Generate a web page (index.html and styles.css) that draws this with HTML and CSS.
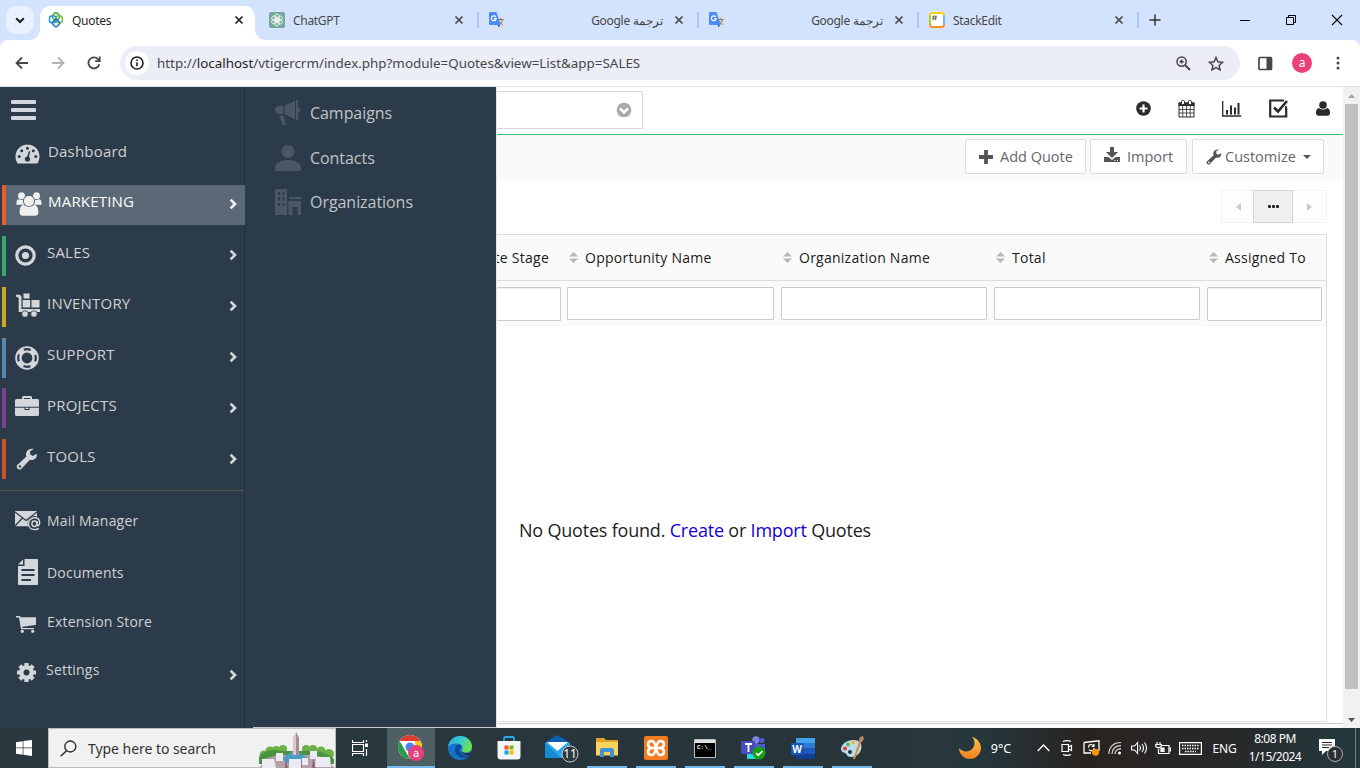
FILE: index.html
```html
<!DOCTYPE html>
<html lang="en">
<head>
<meta charset="utf-8">
<title>Quotes</title>
<link rel="stylesheet" href="styles.css">
</head>
<body>
<svg class="defs" aria-hidden="true">
  <defs>
    <symbol id="x" viewBox="0 0 10 10"><path d="M1.5 1.5l7 7M8.5 1.5l-7 7" stroke="currentColor" stroke-width="1.7" fill="none"/></symbol>
    <symbol id="chev" viewBox="0 0 8 12"><path d="M1.6 1.6L6 6l-4.4 4.4" stroke="currentColor" stroke-width="2.7" fill="none"/></symbol>
    <symbol id="wrench" viewBox="0 0 24 24"><path fill="currentColor" fill-rule="evenodd" d="M22.5 6.2l-4 2.5-3-1.7-.1-3.5L19.300 1.200C16.500.300 12.500 1.500 11.300 4.800c-.6 1.500-.4 3.200.1 4.400L1.700 18.400c-1.400 1.300-1.200 3 .2 4.200 1.300 1.100 2.800 1.100 4-.1l9.300-9.700c3.400 1.100 8.700-1.400 7.300-6.600zM4.400 18.900a1.300 1.300 0 1 1 0 2.600 1.300 1.300 0 0 1 0-2.600z"/></symbol>
    <symbol id="translate" viewBox="0 0 16 16"><path d="M6 4h9.500v11.500H9.500z" fill="#dcdcdc"/><path d="M8.500 7.500h6M11.500 6.300v1.200M13.500 7.500c-.5 2.500-2 4-4 5M9.800 8.500c1 2 2.200 3 4 4" stroke="#777" fill="none"/><path d="M8.500 12.500h3l-2 3z" fill="#3b50b5"/><path d="M1 0h6.500l4 13H1a1 1 0 0 1-1-1V1a1 1 0 0 1 1-1z" fill="#4c8bf5"/><path d="M6.800 4.900A2.400 2.400 0 1 0 7.200 6.600H4.900" stroke="#fff" stroke-width="1.200" fill="none"/></symbol>
    <symbol id="sort" viewBox="0 0 9 11"><path d="M4.500 0L9 4.500H0zM4.500 11L9 6.500H0z" fill="#b8b8b8"/></symbol>
  </defs>
</svg>

<header class="tabstrip">
  <button class="tab-search"><svg width="10" height="7" viewBox="0 0 10 7"><path d="M1.200 1.200L5 5l3.800-3.800" stroke="#1f1f1f" stroke-width="2" fill="none"/></svg></button>
  <div class="tab active">
    <svg width="16" height="16" viewBox="0 0 16 16" fill="none" stroke-width="1.500" stroke-linejoin="round"><rect x="4.700" y="1.200" width="6.600" height="6.600" rx="2.200" transform="rotate(45 8 4.500)" stroke="#4cae36"/><rect x="7.700" y="4" width="6.600" height="6.600" rx="2.200" transform="rotate(0 11 7.300)" stroke="#7dbb3c"/><rect x="1.500" y="4" width="6.600" height="6.600" rx="2.200" stroke="#1f9bd8"/><rect x="4.900" y="8" width="6.200" height="6.200" rx="2" transform="rotate(45 8 11.100)" stroke="#1976c0"/></svg>
    <span class="tab-title">Quotes</span><svg class="close" width="10" height="10"><use href="#x"/></svg>
  </div>
  <div class="tab">
    <svg width="16" height="16" viewBox="0 0 16 16"><rect width="16" height="16" rx="2" fill="#74aa9c"/><g fill="none" stroke="#fff" stroke-width=".8"><rect x="6" y="2.200" width="4.200" height="7" rx="2"/><rect x="6" y="2.200" width="4.200" height="7" rx="2" transform="rotate(60 8 8)"/><rect x="6" y="2.200" width="4.200" height="7" rx="2" transform="rotate(120 8 8)"/><rect x="6" y="2.200" width="4.200" height="7" rx="2" transform="rotate(180 8 8)"/><rect x="6" y="2.200" width="4.200" height="7" rx="2" transform="rotate(240 8 8)"/><rect x="6" y="2.200" width="4.200" height="7" rx="2" transform="rotate(300 8 8)"/></g></svg>
    <span class="tab-title">ChatGPT</span><svg class="close" width="10" height="10"><use href="#x"/></svg>
  </div>
  <div class="tab"><svg width="16" height="16"><use href="#translate"/></svg><span class="tab-title rtl" dir="rtl">ترجمة Google</span><svg class="close" width="10" height="10"><use href="#x"/></svg></div>
  <div class="tab"><svg width="16" height="16"><use href="#translate"/></svg><span class="tab-title rtl" dir="rtl">ترجمة Google</span><svg class="close" width="10" height="10"><use href="#x"/></svg></div>
  <div class="tab">
    <svg width="16" height="16" viewBox="0 0 16 16"><rect x="1" y="1" width="14" height="14" rx="2.500" fill="#fff"/><path d="M1 13V3" stroke="#b5cc18" stroke-width="2"/><path d="M15 13V3" stroke="#6fb7f5" stroke-width="2"/><path d="M1 3.500Q1 1 3.500 1h9Q15 1 15 3.500" fill="none" stroke="#fdd017" stroke-width="2"/><path d="M1 12.500Q1 15 3.500 15h9q2.500 0 2.500-2.500" fill="none" stroke="#f58f22" stroke-width="2"/><path d="M4.800 3.300l-.6 5M7 3.300l-.6 5M3.300 4.800H8M3 6.700h4.700" stroke="#555" stroke-width=".8"/></svg>
    <span class="tab-title">StackEdit</span><svg class="close" width="10" height="10"><use href="#x"/></svg>
  </div>
  <button class="new-tab"><svg width="12" height="12" viewBox="0 0 12 12"><path d="M6 .5v11M.5 6h11" stroke="#333" stroke-width="1.500"/></svg></button>
  <div class="window-controls">
    <span><svg width="12" height="12" viewBox="0 0 12 12"><path d="M1 6.500h10" stroke="#000"/></svg></span>
    <span><svg width="12" height="12" viewBox="0 0 12 12"><path d="M1.500 3.500h7v7h-7zM3.500 3.500v-2h7v7h-2" stroke="#000" fill="none"/></svg></span>
    <span><svg width="12" height="12" viewBox="0 0 12 12"><path d="M1 1l10 10M11 1L1 11" stroke="#000" stroke-width="1.100"/></svg></span>
  </div>
</header>

<div class="toolbar-back">
<div class="toolbar">
  <span class="nav-btn"><svg width="14" height="14" viewBox="0 0 14 14"><path d="M13 7H2M7 1.500L1.500 7 7 12.500" stroke="#474747" stroke-width="1.800" fill="none"/></svg></span>
  <span class="nav-btn"><svg width="14" height="14" viewBox="0 0 14 14"><path d="M1 7h11M7 1.500L12.500 7 7 12.500" stroke="#b1b1b1" stroke-width="1.800" fill="none"/></svg></span>
  <span class="nav-btn"><svg width="14" height="14" viewBox="0 0 14 14"><path d="M12.300 8.200A5.500 5.500 0 1 1 11 3.200l1.500 1.500M12.700.6v4.600H8.200" stroke="#474747" stroke-width="1.800" fill="none"/></svg></span>
  <div class="omnibox">
    <span class="site-info"><svg width="14" height="14" viewBox="0 0 14 14"><circle cx="7" cy="7" r="6" fill="none" stroke="#222" stroke-width="1.600"/><path d="M7 6.200v4M7 3.500v1.500" stroke="#222" stroke-width="1.600"/></svg></span>
    <span class="url">http://<b>localhost</b>/vtigercrm/index.php?module=Quotes&amp;view=List&amp;app=SALES</span>
    <svg class="zoom-icon" width="15" height="15" viewBox="0 0 15 15"><circle cx="5.600" cy="5.600" r="4.600" stroke="#474747" stroke-width="1.500" fill="none"/><path d="M9 9l5 5" stroke="#474747" stroke-width="2"/><path d="M5.600 3.600v4M3.600 5.600h4" stroke="#474747" stroke-width="1.600"/></svg>
    <svg width="16" height="15" viewBox="0 0 16 15"><path d="M8 1.600l1.900 4.200 4.700.5-3.500 3.100 1 4.500L8 11.500l-4.100 2.400 1-4.500-3.500-3.100 4.700-.5z" fill="none" stroke="#474747" stroke-width="1.500"/></svg>
  </div>
  <span class="panel-btn"><svg width="15" height="15" viewBox="0 0 15 15"><rect x="1" y="1.500" width="12.500" height="12" rx="1" fill="none" stroke="#474747" stroke-width="1.700"/><path d="M8.500 1.500h5v12h-5z" fill="#474747"/></svg></span>
  <span class="avatar">a</span>
  <span class="dots"><svg width="4" height="14" viewBox="0 0 4 14" fill="#474747"><circle cx="2" cy="2" r="1.500"/><circle cx="2" cy="7" r="1.500"/><circle cx="2" cy="12" r="1.500"/></svg></span>
</div>
</div>

<div class="page">
  <nav class="app-menu">
    <div class="burger"><i></i><i></i><i></i></div>
    <a class="item plain dash"><svg width="25" height="20" viewBox="0 0 25 20"><path fill="currentColor" d="M12.500.5A12 12 0 0 0 .5 12.500c0 2.300.7 4.700 1.800 6.500.3.400.5.500 1 .5h18.400c.5 0 .7-.1 1-.5 1.100-1.800 1.800-4.200 1.800-6.500a12 12 0 0 0-12-12z"/><g fill="#2c3b49"><circle cx="4.200" cy="12.500" r="1.500"/><circle cx="6.700" cy="6.700" r="1.500"/><circle cx="12.500" cy="4.200" r="1.500"/><circle cx="18.300" cy="6.700" r="1.500"/><circle cx="20.800" cy="12.500" r="1.500"/><circle cx="12.500" cy="15" r="2.600"/><path d="M12 13L14 7l1.300.4-1.600 6z"/></g></svg><span class="label">Dashboard</span></a>
    <a class="item app marketing"><svg width="26" height="24" viewBox="0 0 26 24" fill="currentColor"><circle cx="5.500" cy="3.700" r="3.500"/><circle cx="20.500" cy="3.700" r="3.500"/><path d="M.4 12c0-3.500 1-4.800 2.500-4.800 1.500.9 3.500.9 5 .4-.4 2 0 3.500 1 5.200H3C1.500 13 .4 13 .4 12zM25.600 12c0-3.500-1-4.800-2.500-4.800-1.500.9-3.500.9-5 .4.400 2 0 3.500-1 5.200H23c1.500.2 2.600.2 2.600-.8z"/><circle cx="13" cy="9" r="5.600" stroke="#5a6975"/><path d="M3.600 20.500c0-5 1.500-7.600 4.300-7.600 3 2.400 7.200 2.400 10.200 0 2.800 0 4.300 2.600 4.300 7.600 0 2-1.200 3.300-3.200 3.300H6.800c-2 0-3.200-1.300-3.200-3.300z"/></svg><span class="label">MARKETING</span><svg class="arrow" width="8" height="12"><use href="#chev"/></svg></a>
    <a class="item app sales"><svg width="21" height="21" viewBox="0 0 21 21"><circle cx="10.500" cy="10.500" r="8.700" stroke="currentColor" stroke-width="3.200" fill="none"/><circle cx="10.500" cy="10.500" r="3.600" fill="currentColor"/></svg><span class="label">SALES</span><svg class="arrow" width="8" height="12"><use href="#chev"/></svg></a>
    <a class="item app inventory"><svg width="25" height="24" viewBox="0 0 25 24" fill="currentColor"><path d="M0 1.800h3.800l1.700 1.700V16H24v3H2.700V5L0 3.500z"/><path d="M7.500.5h6v5h-6zM6.700 7h7.500v7.500H6.700zM15.500 7h8v7.500h-8z"/><circle cx="9" cy="21" r="3.300" stroke="#2c3b49" stroke-width=".8"/><circle cx="18" cy="21" r="3.300" stroke="#2c3b49" stroke-width=".8"/></svg><span class="label">INVENTORY</span><svg class="arrow" width="8" height="12"><use href="#chev"/></svg></a>
    <a class="item app support"><svg width="24" height="24" viewBox="0 0 24 24" fill="none"><circle cx="12" cy="12" r="8.600" stroke="currentColor" stroke-width="6.400"/><circle cx="12" cy="12" r="8.800" stroke="#2c3b49" stroke-width="2.200" stroke-dasharray="7 6.823" stroke-dashoffset="3.500"/></svg><span class="label">SUPPORT</span><svg class="arrow" width="8" height="12"><use href="#chev"/></svg></a>
    <a class="item app projects"><svg width="24" height="20" viewBox="0 0 24 20" fill="currentColor"><path d="M7 3V1.500Q7 0 8.500 0h7Q17 0 17 1.500V3h5.500Q24 3 24 4.500v6.200H0V4.500Q0 3 1.500 3zm2-1v1h6V2z" fill-rule="evenodd"/><path d="M0 11.700h9.500V14h5v-2.300H24v6.800q0 1.500-1.500 1.500h-21Q0 20 0 18.500z"/><path d="M10.500 11.700h3V13h-3z"/></svg><span class="label">PROJECTS</span><svg class="arrow" width="8" height="12"><use href="#chev"/></svg></a>
    <a class="item app tools"><svg width="22" height="22"><use href="#wrench"/></svg><span class="label">TOOLS</span><svg class="arrow" width="8" height="12"><use href="#chev"/></svg></a>
    <hr>
    <a class="item plain mail"><svg width="26" height="20" viewBox="0 0 26 20"><path d="M0 0h22v5.500a7 7 0 0 0-8.500 9.800H0z" fill="currentColor"/><path d="M0 1l11 8.500L22 1M0 15l7.500-8M14.500 7l2 1.500" stroke="#2c3b49" stroke-width="1.200" fill="none"/><path d="M22.500 10.300l-.6 3.700c-.1 1.500 2.800 1 2.800-2.200 0-3.400-2.500-5-5.300-5-3.400 0-5.900 2.600-5.900 5.900 0 3.700 2.700 5.900 6 5.900 1.800 0 3.200-.4 4.200-1.200" stroke="currentColor" stroke-width="1.400" fill="none"/><ellipse cx="19.400" cy="12.700" rx="2.500" ry="2.700" stroke="currentColor" stroke-width="1.500" fill="none"/></svg><span class="label">Mail Manager</span></a>
    <a class="item plain docs"><svg width="20" height="26" viewBox="0 0 20 26"><path d="M6.500 0H19q1 0 1 1v24q0 1-1 1H1q-1 0-1-1V7h6.500zM5 .5v5H0z" fill="currentColor"/><path d="M3.500 11h13M3.500 16h13M3.500 21h9.500" stroke="#2c3b49" stroke-width="2"/></svg><span class="label">Documents</span></a>
    <a class="item plain store"><svg width="20" height="17" viewBox="0 0 20 17" fill="currentColor"><path d="M0 0h4l.7 1.300H20V9L6.300 10.700l.2 1.300H18v1.300H5L3 1.500H0z"/><circle cx="6.300" cy="15.300" r="1.600"/><circle cx="16.700" cy="15.300" r="1.600"/></svg><span class="label">Extension Store</span></a>
    <a class="item plain settings"><svg width="19" height="19" viewBox="0 0 19 19"><path d="M9.500 0v19M0 9.500h19M2.800 2.800l13.400 13.400M16.200 2.800L2.800 16.200" stroke="currentColor" stroke-width="4.200"/><circle cx="9.500" cy="9.500" r="7.300" fill="currentColor"/><circle cx="9.500" cy="9.500" r="3" fill="#2c3b49"/></svg><span class="label">Settings</span><svg class="arrow" width="8" height="12"><use href="#chev"/></svg></a>
  </nav>

  <nav class="sub-menu">
    <a><svg width="26" height="26" viewBox="0 0 26 26" fill="currentColor"><path d="M4 6h4.500v8H4Q0 13.500 0 10t4-4zM9.800 5.800L20 .8v18.500l-10.200-5zM21 0h2v7.500q2.500 0 2.500 2.500T23 12.500V20h-2zM4 15.500h4.500L10.800 25H8z"/></svg><span>Campaigns</span></a>
    <a><svg width="26" height="26" viewBox="0 0 26 26" fill="currentColor"><circle cx="13" cy="6.500" r="6.500"/><path d="M0 26v-3c0-4.500 6-8 13-8s13 3.500 13 8c0 1.500 0 3-2 3z"/></svg><span>Contacts</span></a>
    <a><svg width="26" height="26" viewBox="0 0 26 26" fill="currentColor"><path fill-rule="evenodd" d="M1 0h11v26H0V1zM3 3v3h2V3zm4.500 0v3h2V3zM3 8.500v3h2v-3zm4.500 0v3h2v-3zM3 14v3h2v-3zm4.500 0v3h2v-3zM14 8h12v2H14zM13.500 12H26v14h-3.500v-8h-5v8h-4z"/></svg><span>Organizations</span></a>
    <i class="edge-line"></i>
  </nav>

  <main class="content">
    <div class="topbar">
      <div class="search-box"><svg width="16" height="16" viewBox="0 0 16 16"><circle cx="8" cy="8" r="7.300" fill="#aaa"/><path d="M4 6.500l4 4 4-4" stroke="#fff" stroke-width="2.500" fill="none"/></svg></div>
      <div class="top-icons">
        <svg width="15" height="15" viewBox="0 0 15 15"><circle cx="7.500" cy="7.500" r="7.300" fill="#2b2b2b"/><path d="M7.500 3.500v8M3.500 7.500h8" stroke="#fff" stroke-width="2.200"/></svg>
        <svg width="17" height="18" viewBox="0 0 17 18"><path d="M1 3h15v14H1z" fill="#fff" stroke="#2b2b2b"/><path d="M.5 2.500h16V6H.5z" fill="#2b2b2b"/><path d="M1 9.500h15M1 13h15M4.700 6v11M8.500 6v11M12.200 6v11" stroke="#2b2b2b" stroke-width=".8"/><rect x="3.500" y=".5" width="3" height="4" rx="1" fill="#fff" stroke="#2b2b2b"/><rect x="10.500" y=".5" width="3" height="4" rx="1" fill="#fff" stroke="#2b2b2b"/></svg>
        <svg width="20" height="16" viewBox="0 0 20 16"><path d="M.7 0v15h18.500" stroke="#2b2b2b" stroke-width="1.300" fill="none"/><path d="M5 9v4.500M9 4.500v9M13 6.500v7M16.500 2v11.500" stroke="#2b2b2b" stroke-width="2"/></svg>
        <svg width="19" height="19" viewBox="0 0 19 19"><path d="M13 1.500H1.200v16h16V9" stroke="#2b2b2b" stroke-width="2.200" fill="none"/><path d="M5 8.500l4 4 9-10.500" stroke="#2b2b2b" stroke-width="2.600" fill="none"/><path d="M13 1.500h2M17 12V7" stroke="#2b2b2b" stroke-width="1.800"/></svg>
        <svg width="14" height="15" viewBox="0 0 14 15" fill="#2b2b2b"><circle cx="7" cy="4" r="3.800"/><path d="M0 12c0-3.500 1-4.500 3-5 2.500 2 5.500 2 8 0 2 .5 3 1.500 3 5 0 1.800-1 2.700-2.500 2.700h-9C1 14.700 0 13.800 0 12z"/></svg>
      </div>
    </div>
    <div class="actions">
      <button class="b-add"><svg width="14" height="14" viewBox="0 0 14 14"><path d="M7 0v14M0 7h14" stroke="#555" stroke-width="3.800"/></svg><span>Add Quote</span></button>
      <button class="b-imp"><svg width="16" height="16" viewBox="0 0 16 16" fill="#555"><path d="M6 0h4v5h4L8 11 2 5h4z"/><path fill-rule="evenodd" d="M0 10h4.500L8 13l3.500-3H16v5H0zm10.500 3v1h1v-1zm2.500 0v1h1v-1z"/></svg><span>Import</span></button>
      <button class="b-cus"><svg width="16" height="16" color="#555"><use href="#wrench"/></svg><span>Customize</span><i class="caret"></i></button>
    </div>
    <div class="pager">
      <span class="prev"><svg width="5" height="8" viewBox="0 0 5 8"><path d="M5 0v8L0 4z" fill="#c9c9c9"/></svg></span>
      <span class="mid"><i></i><i></i><i></i></span>
      <span class="next"><svg width="5" height="8" viewBox="0 0 5 8"><path d="M0 0v8l5-4z" fill="#c9c9c9"/></svg></span>
    </div>
    <section class="list">
      <div class="row head">
        <div class="cut"><span>Quote Stage</span></div>
        <div><svg width="9" height="11"><use href="#sort"/></svg><span>Opportunity Name</span></div>
        <div><svg width="9" height="11"><use href="#sort"/></svg><span>Organization Name</span></div>
        <div><svg width="9" height="11"><use href="#sort"/></svg><span>Total</span></div>
        <div><svg width="9" height="11"><use href="#sort"/></svg><span>Assigned To</span></div>
      </div>
      <div class="row filters"><div class="field first"></div><div class="field"></div><div class="field"></div><div class="field"></div><div class="field last"></div></div>
      <p class="empty">No Quotes found. <a>Create</a> or <a>Import</a> Quotes</p>
    </section>
    <div class="foot"></div>
  </main>

  <div class="scrollbar"><svg width="7" height="4" viewBox="0 0 7 4"><path d="M0 4h7L3.500 0z" fill="#a3a3a3"/></svg><i></i><svg width="7" height="4" viewBox="0 0 7 4"><path d="M0 0h7L3.500 4z" fill="#505050"/></svg></div>
</div>

<footer class="taskbar">
  <span class="start"><svg width="16" height="16" viewBox="0 0 16 16" fill="#fff"><path d="M0 2.200l6.700-1v6.300H0zM7.400 1.100L16 0v7.500H7.400zM0 8.300h6.700v6.400L0 13.800zM7.400 8.300H16V16l-8.600-1.200z"/></svg></span>
  <div class="search">
    <svg width="17" height="17" viewBox="0 0 17 17"><circle cx="10.300" cy="6.500" r="5.500" stroke="#222" stroke-width="1.300" fill="none"/><path d="M6.500 10.700L.7 16.300" stroke="#222" stroke-width="1.400"/></svg>
    <span>Type here to search</span>
    <svg class="art" width="77" height="37" viewBox="0 0 77 37"><g fill="#6cb04a"><circle cx="6" cy="24" r="4.500"/><circle cx="12" cy="20" r="4.500"/><circle cx="18" cy="19" r="4"/><circle cx="25" cy="18" r="4"/><circle cx="48" cy="18" r="4"/><circle cx="55" cy="18" r="4"/><circle cx="63" cy="20" r="4.500"/><circle cx="71" cy="23" r="5"/></g><path d="M1 26q7-8 15-7l8 1h30q14 0 22 8v5H1z" fill="#4b9242"/><path d="M2 37l4-9 14-4h36l14 4 6 9z" fill="#b3a0a8"/><path d="M24 27l13-8 14 9-4 4H28z" fill="#4a9cc4"/><path d="M35 24V7l3-6 3 6v17z" fill="#e0c6ca"/><path d="M38 1l3 6v17h-3z" fill="#a8899a"/><path d="M27 28l3 9h-3zM43 27l1 10h-2zM55 27l3 10h-4z" fill="#8c6b78"/><g fill="#eceaf2"><path d="M4 28h12l2 9H4zM18 22h7v8h-7zM31 28h12v9H31zM44 27h6v7h-6zM52 20h7v8h-7zM58 26h14l1 10H57z"/></g></svg>
  </div>
  <div class="apps">
    <span><svg width="17" height="16" viewBox="0 0 17 16" fill="none" stroke="#fff"><path d="M.5 0v2.500h11V0M.5 4.500h11v7H.5zM.5 16v-2.500h11V16M14.500 0v2M14.500 9v7" stroke-width="1.200"/><path d="M13 3.500h3v3.500h-3z" fill="#fff" stroke="none"/></svg></span>
    <span class="open current"><svg width="28" height="28" viewBox="0 0 28 28"><circle cx="13" cy="13" r="12" fill="#fff"/><path d="M13 13H25A12 12 0 0 1 13 25z" fill="#f9c31f"/><path d="M2.600 7A12 12 0 0 1 23.400 7H13z" fill="#dd3b2e"/><path d="M2.600 7L9 18l4 7A12 12 0 0 1 2.600 7z" fill="#259b4b"/><path d="M23.400 7A12 12 0 0 1 13 25l5-9V7z" fill="#f9c31f"/><circle cx="13" cy="13" r="5.800" fill="#fff"/><circle cx="13" cy="13" r="4.500" fill="#4285f4"/><circle cx="19" cy="19" r="8" fill="#e8407c"/><text x="19" y="22.500" text-anchor="middle" class="badge-text">a</text></svg></span>
    <span><svg width="24" height="24" viewBox="0 0 24 24"><defs><linearGradient id="edge" x2="1" y2=".4"><stop stop-color="#2aa8e8"/><stop offset=".6" stop-color="#3acfcb"/><stop offset="1" stop-color="#6be04a"/></linearGradient></defs><circle cx="12" cy="12" r="12" fill="#1671c8"/><path d="M0 11C1 4 6 0 12 0c7 0 12 5 12 10.500 0 4-3 6-7 6-3 0-4-1.500-3-3 2-3-1-6-5-6-4 0-7.500 1-9 3.500z" fill="url(#edge)"/><path d="M9 9.500c-4 4-2 10 4 12 4 1 8-.5 9.500-3-3 1.500-7 1.500-9.500-1S11 12 13.500 10.500C12.500 9 10.500 8.800 9 9.500z" fill="#0b4a93"/><path d="M13.500 14.500c1 3 5 3.500 10.500 1.500L23 18.500c-4 1.500-9.500 0-9.500-4z" fill="#25343b"/></svg></span>
    <span><svg width="24" height="24" viewBox="0 0 24 24"><path d="M7 6V2.500Q7 1 8.500 1h7Q17 1 17 2.500V6" fill="none" stroke="#29a9e6" stroke-width="1.800"/><path d="M.5 5h23v15.500q0 3-3 3h-17q-3 0-3-3z" fill="#f3f5f6"/><path d="M7.500 9.500h4v4h-4z" fill="#f25022"/><path d="M12.500 9.500h4v4h-4z" fill="#7fba00"/><path d="M7.500 14.500h4v4h-4z" fill="#00a4ef"/><path d="M12.500 14.500h4v4h-4z" fill="#ffb900"/></svg></span>
    <span><svg class="mail-ico" width="34" height="28" viewBox="0 0 34 28"><path d="M0 7.500L12 0l13 7.500z" fill="#0d5fb0"/><path d="M0 7.500h25V23H0z" fill="#2ba5e8"/><path d="M2 7h21l-10.500 9z" fill="#fff"/><path d="M0 8l16 15H0z" fill="#168bd5"/><circle cx="25" cy="19" r="8" fill="#2c383d" stroke="#c7c9ca"/><text x="25" y="23.200" text-anchor="middle" class="badge-text count">11</text></svg></span>
    <span class="open"><svg width="22" height="20" viewBox="0 0 22 20"><path d="M0 0h8l2 2h12v15H0z" fill="#dfa222"/><path d="M0 4h22v13.500H0z" fill="#fbd25d"/><path d="M4 19v-7q0-2 2-2h10q2 0 2 2v7h-4v-5H8v5z" fill="#3f92d8"/></svg></span>
    <span class="open"><svg width="24" height="24" viewBox="0 0 24 24"><rect width="24" height="24" rx="2" fill="#f37b20"/><path d="M9 12C5.500 12 4 10.500 4 8.300S5.500 5 7.700 5C11 5 11 9.500 12 12c1-2.500 1-7 4.300-7C18.500 5 20 6.100 20 8.300S18.500 12 15 12M9 12c-3.500 0-5 1.500-5 3.700S5.500 19 7.700 19C11 19 11 14.500 12 12c1 2.500 1 7 4.300 7 2.200 0 3.700-1.100 3.700-3.300S18.500 12 15 12H9" fill="none" stroke="#fff" stroke-width="2.500"/></svg></span>
    <span class="open"><svg width="22" height="19" viewBox="0 0 22 19"><path d="M.5.500h21v18H.5z" fill="#000" stroke="#b8bdc0"/><path d="M1 1h20v3H1z" fill="#dfe3e5"/><text x="3" y="10" class="cmd-text">C:\_</text></svg></span>
    <span class="open"><svg width="26" height="24" viewBox="0 0 26 24"><circle cx="15" cy="4" r="3.700" fill="#7b83eb"/><circle cx="21" cy="4.500" r="2.500" fill="#5059c9"/><path d="M10 8h14v8H10z" fill="#5059c9"/><path d="M6 15h11v8H6z" fill="#26d6da"/><path d="M0 5h14v13H0z" fill="#464eb8"/><path d="M4 8h7M7.500 8v8" stroke="#fff" stroke-width="1.800"/><circle cx="18" cy="17" r="6.500" fill="#13a10e"/><path d="M15 17l2.200 2.200L21.500 15" stroke="#fff" stroke-width="1.700" fill="none"/></svg></span>
    <span class="open"><svg width="24" height="21" viewBox="0 0 24 21"><path d="M5 0h19v5H5z" fill="#41a5ee"/><path d="M5 5h19v5.500H5z" fill="#2b7cd3"/><path d="M5 10.500h19V16H5z" fill="#185abd"/><path d="M5 16h19v5H5z" fill="#103f91"/><path d="M0 5h12.500v12H0z" fill="#1856b5"/><text x="6.200" y="14.500" text-anchor="middle" class="word-text">W</text></svg></span>
    <span class="open"><svg width="24" height="24" viewBox="0 0 24 24"><path d="M2 10C6 3 19 2 21 8c2 5-2 13-10 13-4 0-4-3-6-4-4-1-5-4-3-7z" fill="#b8dcf2"/><circle cx="5" cy="12.500" r="2" fill="#d9423a"/><circle cx="8" cy="8.500" r="2" fill="#5fb64b"/><circle cx="13" cy="6.500" r="2" fill="#f1b434"/><circle cx="10" cy="16" r="2" fill="#29343a"/><path d="M13 23L19 6l2 1-6 16z" fill="#e08b34"/><path d="M18 6l2-5 3-1 1 3-3 4z" fill="#b98860"/></svg></span>
  </div>
  <div class="tray">
    <span class="moon"><svg width="24" height="22" viewBox="0 0 24 22"><defs><linearGradient id="moon" x2="0" y2="1"><stop stop-color="#fbc54c"/><stop offset="1" stop-color="#ee7f1f"/></linearGradient></defs><path d="M14 0c4 4 3 10-1 13-4 2.500-9 1.500-12-2 0 6 5 11 11 11s11-5 11-11c0-5-4-10-9-11z" fill="url(#moon)"/></svg></span>
    <span class="temp">9°C</span>
    <span class="chevron-cell"><svg width="13" height="8" viewBox="0 0 13 8"><path d="M.7 7L6.500 1l5.800 6" stroke="#fff" stroke-width="1.300" fill="none"/></svg></span>
    <span><svg width="12" height="16" viewBox="0 0 12 16" fill="none" stroke="#fff"><path d="M1 4.500h6.500v7H1zM7.500 7l3-1.500v5L7.500 9M2 1.500C4 .3 8 .3 10 1.500M2 14.500c2 1.200 6 1.200 8 0" stroke-width="1.200"/></svg></span>
    <span><svg width="17" height="16" viewBox="0 0 17 16" fill="none"><path d="M1 2.500L16 .8V11M1 2.500V13h7" stroke="#fff" stroke-width="1.300"/><path d="M5.500 7.500c0-2 1-3 2.500-3 1 0 2 .5 2.500 1.500M11 4v2.500H8.500M11 8c0 1.800-1 2.800-2.500 2.800S6.500 10.300 6 9.500" stroke="#fff" stroke-width="1.200"/><circle cx="12.500" cy="12.300" r="3.500" fill="#ff9000"/></svg></span>
    <span><svg width="14" height="14" viewBox="0 0 14 14" fill="none" stroke="#ddd"><path d="M.8 13C1 6 5.500 1.500 13 1.500M4 13c.3-5 3.500-8.200 9-8.300M7 13c.2-3.300 2.300-5.200 6-5.400" stroke-width="1.200"/><circle cx="11.500" cy="12" r="1.500" fill="#fff" stroke="none"/></svg></span>
    <span><svg width="17" height="14" viewBox="0 0 17 14" fill="none" stroke="#fff" stroke-width="1.100"><path d="M.6 5h3l3-3.500v11L3.600 9h-3zM8.500 4.500q2 2.500 0 5M11 3q3 4 0 8M13.500 1.500q4 5.500 0 11"/></svg></span>
    <span><svg width="16" height="13" viewBox="0 0 16 13" fill="none" stroke="#fff" stroke-width="1.200"><path d="M7 3.500h7v8H3.500V7M14 6h1.500v3H14M2 0v2.500M5 0v2.500M.8 2.500h5.500v2q-2.700 2.500-5.500 0z"/><path d="M6 6h3v3.500H6z" fill="#fff"/></svg></span>
    <span><svg width="23" height="13" viewBox="0 0 23 13" fill="none" stroke="#fff"><path d="M.6.600h21.800v11.800H.6z" stroke-width="1.200"/><path d="M3 3.500h17M3 6.500h17M6 9.500h11" stroke-dasharray="1.500 1" stroke-width="1.300"/></svg></span>
    <span class="lang">ENG</span>
    <span class="clock"><span>8:08 PM</span><span>1/15/2024</span></span>
    <span><svg class="note" width="26" height="25" viewBox="0 0 26 25"><path d="M1 1h16v12H8l-4 4v-4H1z" fill="#fff"/><path d="M4 4.500h10M4 7h10M4 9.500h7" stroke="#25292b"/><circle cx="17" cy="16" r="7.500" fill="#2b2f31" stroke="#a9acad"/><text x="17" y="20" text-anchor="middle" class="badge-text">1</text></svg></span>
    <span class="peek"></span>
  </div>
</footer>
</body>
</html>
```
FILE: styles.css
```css
* { box-sizing: border-box; }
body { margin: 0; width: 1360px; height: 768px; overflow: hidden; display: flex; flex-direction: column; font-family: "Open Sans", "Noto Sans", sans-serif; background: #fff; }
button { font: inherit; padding: 0; border: 0; background: none; }
svg { display: block; flex: none; }
span { white-space: nowrap; }
.defs { position: absolute; width: 0; height: 0; }

/* Tab strip */
.tabstrip { height: 40px; flex: none; display: flex; background: #d3e3fd; padding-left: 6px; font-family: "Noto Sans", sans-serif; font-size: 12px; color: #474747; }
.tab-search { width: 28px; height: 28px; margin: 6px 6px 0 0; border-radius: 10px; background: #e9f0fe; display: flex; align-items: center; justify-content: center; }
.tab { width: 220px; height: 24px; margin-top: 8px; display: flex; align-items: center; padding: 0 14px 0 11px; position: relative; }
.tab:not(.active)::after { content: ""; position: absolute; right: -1px; top: 4px; width: 2px; height: 16px; background: #a8c7fa; }
.tab.active { width: 215px; height: 34px; margin: 6px 3px 0 0; padding: 0 11px 6px 8px; background: #fff; border-radius: 10px 10px 0 0; color: #1f1f1f; }
.tab.active::before, .tab.active::after { content: ""; position: absolute; bottom: 0; width: 10px; height: 10px; }
.tab.active::before { left: -10px; background: radial-gradient(circle at 0 0, #d3e3fd 9.500px, #fff 10px); }
.tab.active::after { right: -10px; background: radial-gradient(circle at 100% 0, #d3e3fd 9.500px, #fff 10px); }
.tab-title { flex: 1; margin: 1px 0 0 8px; letter-spacing: -.3px; line-height: 16px; }
.tab-title.rtl { margin-right: 11px; }
.new-tab { width: 34px; display: flex; align-items: center; justify-content: center; }
.window-controls { margin-left: auto; display: flex; }
.window-controls span { width: 46px; display: flex; align-items: center; justify-content: center; }

/* Toolbar */
.toolbar-back { background: #d3e3fd; flex: none; }
.toolbar { height: 47px; background: #fff; border-radius: 8px 8px 0 0; border-bottom: 1px solid #dfe1e5; display: flex; align-items: center; padding-left: 4px; }
.nav-btn { width: 36px; display: flex; justify-content: center; }
.omnibox { margin-left: 8px; width: 1120px; height: 34px; border-radius: 17px; background: #ebeef7; display: flex; align-items: center; padding: 0 16px 0 5px; }
.site-info { width: 24px; height: 24px; border-radius: 12px; background: #fff; display: flex; align-items: center; justify-content: center; margin-right: 8px; }
.url { font-family: "Noto Sans", sans-serif; font-size: 13.400px; color: #474747; }
.url b { font-weight: 400; color: #1f1f1f; }
.zoom-icon { margin: 0 17px 0 auto; }
.panel-btn { margin-left: 18px; }
.avatar { width: 20px; height: 20px; border-radius: 10px; background: #ec407a; color: #fff; font: 12px/19px "Noto Sans", sans-serif; text-align: center; margin-left: 19px; }
.dots { margin-left: 24px; }

/* Application menu */
.page { height: 641px; flex: none; display: flex; }
.app-menu { width: 245px; background: #2c3b49; border-right: 1px solid #222d38; color: #d3d7db; font-size: 15px; display: flex; flex-direction: column; }
.burger { display: flex; flex-direction: column; gap: 4px; margin: 13px 0 0 11px; }
.burger i { width: 25px; height: 4px; border-radius: 1px; background: #d3d7db; }
.item { display: flex; flex: none; }
.item .label { line-height: 20px; color: #d0d2d4; letter-spacing: .2px; }
.item > svg:first-child { margin-left: 15px; }
.item .arrow { margin: 13px 7px 0 auto; }
.dash { margin-top: 21px; height: 44px; }
.dash > svg:first-child { margin-top: 3px; }
.dash .label { margin-left: 8px; font-size: 15px; }
.app { height: 40px; margin: 0 0 11px 2px; border-left: 4px solid; }
.app > svg { color: #d3d7db; }
.app > svg:first-child { margin: 9px 0 0 9px; }
.app .label { margin-top: 6px; padding-left: 8px; }
.marketing { background: #5a6975; border-color: #f05a28; margin-right: -1px; }
.marketing > svg { color: #f0f0f0; }
.marketing > svg:first-child { margin: 7px 0 0 10px; }
.marketing .label { color: #fff; padding-left: 6px; }
.marketing .arrow { margin-right: 8px; }
.sales { border-color: #3aa76d; }
.sales .label { padding-left: 11px; }
.inventory { border-color: #cea91d; }
.inventory > svg:first-child { margin: 6px 0 0 10px; }
.inventory .label { padding-left: 6px; }
.support { border-color: #5a87ae; margin-bottom: 10px; }
.support > svg:first-child { margin-top: 8px; }
.projects { border-color: #7b3f98; }
.projects > svg:first-child { margin-top: 8px; }
.projects .label { margin-top: 7px; }
.projects .arrow, .tools .arrow { margin-top: 14px; }
.tools { border-color: #c8532c; }
.tools > svg:first-child { margin-left: 10px; }
.tools .label { padding-left: 9px; margin-top: 7px; }
hr { width: 244px; margin: 0 0 20px; border: 0; border-top: 1px solid #575652; }
.plain { font-size: 14px; }
.mail { height: 48px; }
.mail .label { margin-left: 6px; }
.docs { height: 56px; }
.docs > svg:first-child { margin-left: 18px; }
.docs .label { margin: 4px 0 0 9px; }
.store { height: 48px; }
.store > svg:first-child { margin: 1px 0 0 16px; }
.store .label { margin: -3px 0 0 11px; }
.settings > svg:first-child { margin-left: 17px; }
.settings .label { margin: -3px 0 0 10px; }
.settings .arrow { margin-top: 6px; }

.sub-menu { width: 251px; background: #2c3b49; padding: 13px 0 0 30px; font-size: 16px; color: #4a5763; display: flex; flex-direction: column; }
.sub-menu a { display: flex; height: 44.500px; }
.sub-menu span { color: #c0c4c8; margin: 1px 0 0 9px; line-height: 25px; letter-spacing: -.05px; }
.edge-line { height: 1px; margin: auto 0 0 -22px; background: #c9cccf; }

/* List view */
.content { flex: 1; min-width: 0; display: flex; flex-direction: column; border-left: 1px solid #e4e4e4; }
.topbar { height: 48px; display: flex; justify-content: space-between; border-bottom: 1px solid #3cb878; }
.search-box { width: 146px; height: 38px; margin-top: 4px; border: 1px solid #d9d9d9; border-left: 0; display: flex; align-items: center; justify-content: flex-end; padding-right: 10px; }
.top-icons { display: flex; align-items: center; padding: 0 13px 4px 0; }
.top-icons svg:nth-child(2) { margin-left: 27px; }
.top-icons svg:nth-child(3) { margin-left: 27px; }
.top-icons svg:nth-child(4) { margin-left: 27px; }
.top-icons svg:nth-child(5) { margin-left: 28px; }
.actions { height: 45px; background: #fafafa; display: flex; justify-content: flex-end; padding: 4px 19px 0 0; color: #666; font-size: 14.500px; letter-spacing: -.1px; }
.actions button { height: 35px; border: 1px solid #dcdcdc; border-radius: 2px; background: #fff; display: flex; align-items: center; padding-left: 13px; color: #666; }
.b-add { width: 121px; margin-right: 4px; }
.b-add span { margin-left: 7px; }
.b-imp { width: 97px; margin-right: 5px; }
.b-imp svg { margin-top: -3px; }
.b-imp span { margin-left: 7px; }
.b-cus { width: 132px; }
.b-cus span { margin-left: 3px; }
.caret { border: 4px solid transparent; border-top-color: #555; border-bottom: 0; margin: 1px 0 0 7px; }
.pager { display: flex; height: 33px; margin: 10px 16px 11px auto; }
.pager span { display: flex; align-items: center; justify-content: center; border: 1px solid #f3f3f3; background: #fdfdfd; }
.pager .prev { width: 32px; border-right: 0; padding-left: 2px; }
.pager .next { width: 34px; border-left: 0; }
.pager .mid { width: 40px; border-color: #d5d5d5; background: #efefef; gap: 1px; }
.mid i { width: 3px; height: 3px; border-radius: 1px; background: #222; }
.list { height: 488px; width: 830px; border: 1px solid #ddd; border-left: 0; }
.row { display: grid; grid-template-columns: 70px 214px 213px 213px 119px; background: #fafafa; }
.head { height: 46px; border-bottom: 1px solid #ddd; font-size: 14px; font-weight: 500; letter-spacing: .25px; color: #1a1a1a; }
.head div { display: flex; align-items: center; min-width: 0; padding-left: 2px; }
.head span { margin-left: 7px; }
.head .cut { justify-content: flex-end; overflow: hidden; padding-right: 18px; }
.filters { height: 45px; padding-top: 6px; }
.field { height: 33px; margin-right: 7px; border: 1px solid #ccc; border-radius: 1px; background: #fff; }
.field.first { border-left: 0; height: 34px; margin-right: 6px; box-shadow: inset 0 1px 1px #eee; }
.field.last { margin-right: 4px; height: 34px; box-shadow: inset 0 1px 1px #eee; }
.empty { margin: 190px 0 0 22px; font-size: 18px; letter-spacing: -.2px; line-height: 28px; color: #222; }
.empty a { color: #1500d8; }
.foot { flex: 1; margin-top: 1px; border-top: 1px solid #ccc; background: #fafafa; }
.scrollbar { width: 17px; background: #f1f1f1; display: flex; flex-direction: column; align-items: center; padding: 7px 0 6px; }
.scrollbar i { width: 13px; height: 585px; background: #c1c1c1; margin: 6px 0 auto; }

/* Taskbar */
.taskbar { height: 40px; display: flex; background: linear-gradient(90deg, #29393f, #27353b 60%, #26373b 72%, #28231f 80%, #27292a 91%, #25373c 98%); color: #fff; font-family: "Noto Sans", sans-serif; }
.start { width: 48px; display: flex; align-items: center; justify-content: center; }
.search { width: 288px; background: #f1f1f1; border: 1px solid #bdbdbd; display: flex; align-items: center; padding-left: 11px; color: #333; font-size: 14px; }
.search span { margin-left: 11px; letter-spacing: -.05px; }
.art { margin: 2px 0 0 auto; }
.apps { display: flex; margin-left: 1px; }
.apps > span { width: 49px; display: flex; align-items: center; justify-content: center; position: relative; }
.apps > span:first-child svg { margin-right: 3px; }
.apps .open::after { content: ""; position: absolute; left: 5px; right: 4px; bottom: 0; height: 2px; background: #76b9ed; }
.apps .current { width: 48px; margin: 0 0 0 1px; background: #4f6065; }
.apps .open.current::after { left: 0; right: 0; }
.mail-ico { margin: 2px 0 0 8px; }
.badge-text { font: 11px "Noto Sans", sans-serif; fill: #fff; }
.badge-text.count { font-size: 12px; }
.cmd-text { font: bold 6px "Liberation Mono", monospace; fill: #fff; }
.word-text { font: bold 10px "Noto Sans", sans-serif; fill: #fff; }
.tray { margin-left: auto; display: grid; grid-template-columns: 32px 32px 38px repeat(5, 24px) 30px 38px 64px 48px 5px; align-items: center; justify-items: center; font-size: 12px; }
.moon { margin-left: 2px; }
.temp { font-size: 12.500px; }
.tray .chevron-cell { justify-self: end; margin-right: 5px; }
.lang { margin-left: 1px; letter-spacing: -.2px; }
.clock { display: flex; flex-direction: column; align-items: center; line-height: 18px; letter-spacing: -.5px; }
.note { margin: 5px 0 0; }
.peek { height: 40px; width: 1px; background: #768084; justify-self: start; }
```
